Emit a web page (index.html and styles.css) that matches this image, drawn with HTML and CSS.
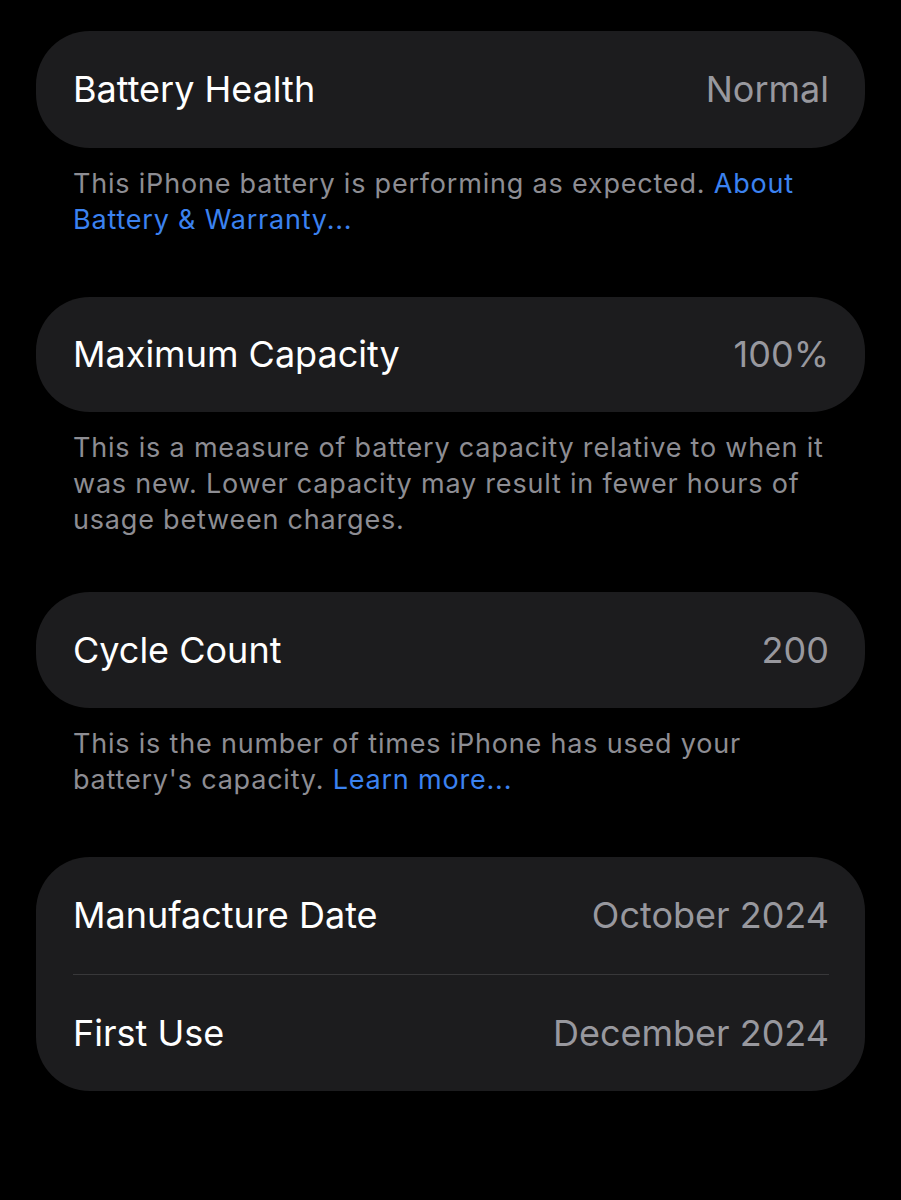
FILE: index.html
```html
<!DOCTYPE html>
<html lang="en">
<head>
<meta charset="utf-8">
<title>Battery Health</title>
<link rel="stylesheet" href="styles.css">
</head>
<body>
<main class="settings">
  <section class="group">
    <div class="card">
      <div class="row"><span class="label">Battery Health</span><span class="value">Normal</span></div>
    </div>
    <p class="footer">This iPhone battery is performing as expected. <a class="link" href="#">About Battery &amp; Warranty...</a></p>
  </section>

  <section class="group group-compact">
    <div class="card">
      <div class="row row-short"><span class="label">Maximum Capacity</span><span class="value">100%</span></div>
    </div>
    <p class="footer">This is a measure of battery capacity relative to when it was new. Lower capacity may result in fewer hours of usage between charges.</p>
  </section>

  <section class="group">
    <div class="card">
      <div class="row"><span class="label">Cycle Count</span><span class="value">200</span></div>
    </div>
    <p class="footer">This is the number of times iPhone has used your battery's capacity. <a class="link" href="#">Learn more...</a></p>
  </section>

  <section class="group">
    <div class="card">
      <div class="row"><span class="label">Manufacture Date</span><span class="value">October 2024</span></div>
      <div class="row"><span class="label">First Use</span><span class="value">December 2024</span></div>
    </div>
  </section>
</main>
</body>
</html>
```
FILE: styles.css
```css
html, body {
  margin: 0;
  padding: 0;
  background: #000;
}

body {
  font-family: Inter, "Noto Sans", "Liberation Sans", sans-serif;
  color: #fff;
}

.settings {
  display: flex;
  flex-direction: column;
  padding: 31px 36px 0;
}

.group {
  display: flex;
  flex-direction: column;
  margin-bottom: 59px;
}

.group-compact {
  margin-bottom: 54px;
}

.card {
  background: #1c1c1e;
  border-radius: 54px;
  padding: 0 36px 0 37px;
}

.row {
  display: flex;
  align-items: center;
  justify-content: space-between;
  height: 116.5px;
  font-size: 36px;
  letter-spacing: 0;
}

.row-short {
  height: 115px;
}

.row + .row {
  border-top: 1px solid #38383a;
}

.label {
  color: #fff;
}

.value {
  color: #98989e;
}

.footer {
  margin: 18px 0 0;
  padding: 0 24px 0 37px;
  font-size: 27px;
  line-height: 36px;
  color: #8d8d93;
  letter-spacing: 0.8px;
}

.link {
  color: #3b82f0;
  text-decoration: none;
}
```
